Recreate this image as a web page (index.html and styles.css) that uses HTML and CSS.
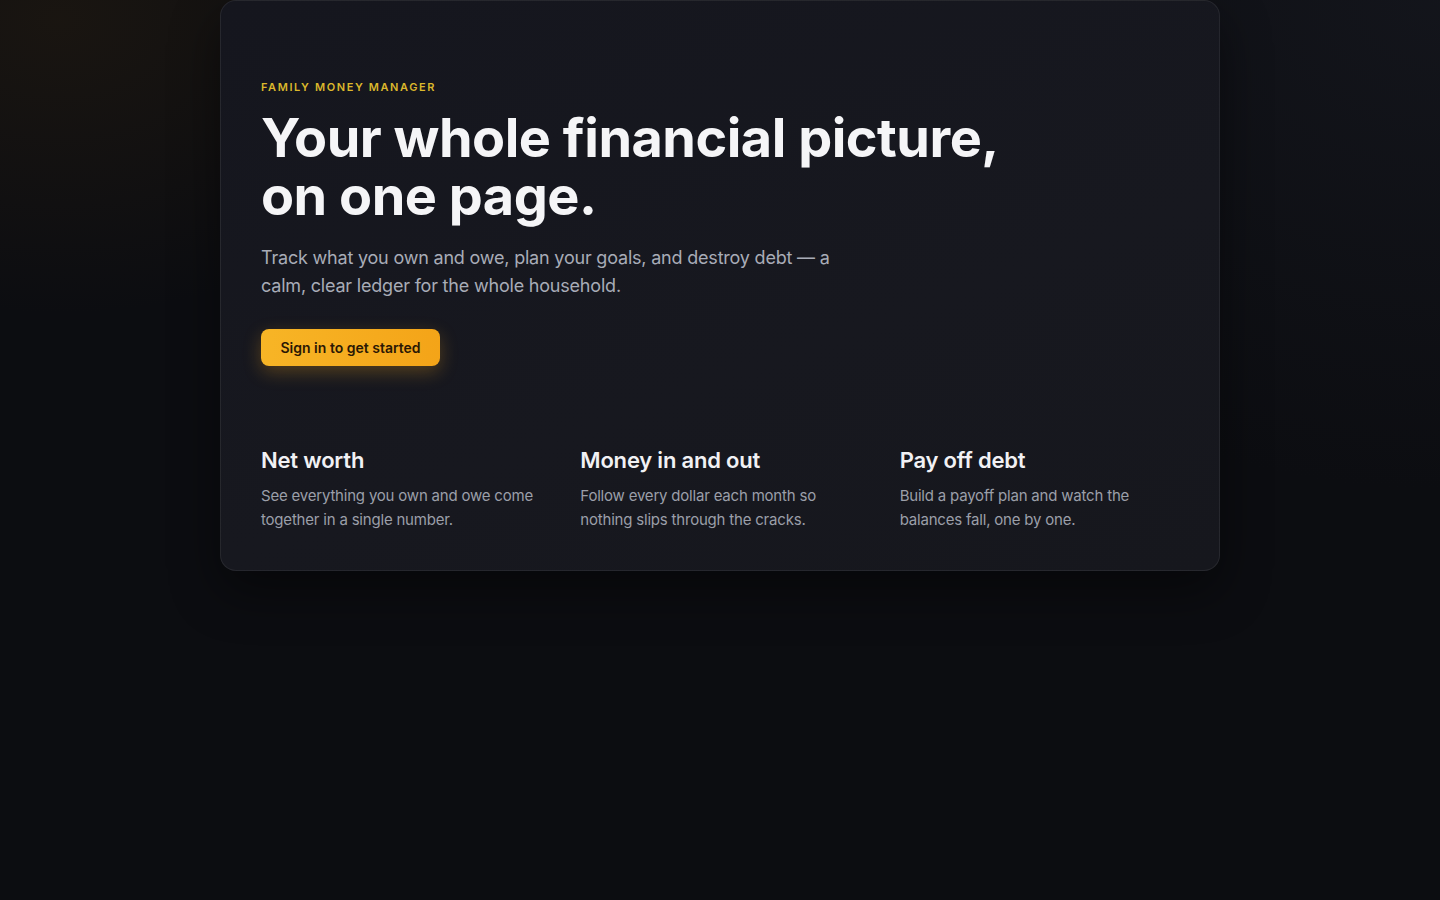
FILE: index.html
```html
<!DOCTYPE html>
<html lang="en">
<head>
<meta charset="utf-8">
<title>Family Money Manager</title>
<link rel="stylesheet" href="styles.css">
</head>
<body>
<main class="page">
  <section class="hero-card">
    <p class="eyebrow">FAMILY MONEY MANAGER</p>
    <h1 class="title">Your whole financial picture,<br>on one page.</h1>
    <p class="lede">Track what you own and owe, plan your goals, and destroy debt — a calm, clear ledger for the whole household.</p>
    <a class="cta" href="#">Sign in to get started</a>
    <div class="features">
      <div class="feature">
        <h2 class="feature-title">Net worth</h2>
        <p class="feature-text">See everything you own and owe come together in a single number.</p>
      </div>
      <div class="feature">
        <h2 class="feature-title">Money in and out</h2>
        <p class="feature-text">Follow every dollar each month so nothing slips through the cracks.</p>
      </div>
      <div class="feature">
        <h2 class="feature-title">Pay off debt</h2>
        <p class="feature-text">Build a payoff plan and watch the balances fall, one by one.</p>
      </div>
    </div>
  </section>
</main>
</body>
</html>
```

FILE: styles.css
```css
* { box-sizing: border-box; }
html, body { margin: 0; padding: 0; }
body {
  min-height: 900px;
  background:
    radial-gradient(ellipse 600px 420px at 60px 20px, rgba(60, 42, 16, 0.28), transparent 70%),
    radial-gradient(ellipse 900px 700px at 100% 0%, rgba(24, 26, 34, 0.6), transparent 70%),
    #0c0d11;
  font-family: Inter, "Noto Sans", sans-serif;
  color: #f2f2f5;
}
.page {
  display: flex;
  justify-content: center;
  padding: 0 220px;
}
.hero-card {
  width: 1000px;
  padding: 78px 40px 38px 40px;
  border-radius: 16px;
  background: linear-gradient(160deg, #15161e 0%, #17181f 60%, #16171d 100%);
  border: 1px solid rgba(255, 255, 255, 0.07);
  box-shadow: 0 20px 50px rgba(0, 0, 0, 0.45);
}
.eyebrow {
  margin: 0;
  font-size: 11px;
  font-weight: 600;
  letter-spacing: 1.6px;
  line-height: 16px;
  color: #dcb82c;
}
.title {
  margin: 14px 0 0;
  font-size: 54px;
  font-weight: 700;
  line-height: 58px;
  letter-spacing: -0.5px;
  color: #f5f5f7;
}
.lede {
  margin: 19px 0 0;
  max-width: 590px;
  font-size: 18px;
  line-height: 28px;
  font-weight: 400;
  letter-spacing: -0.2px;
  color: #a8acb7;
}
.cta {
  display: inline-flex;
  align-items: center;
  margin-top: 29px;
  height: 37px;
  padding: 0 19.5px;
  border-radius: 8px;
  background: linear-gradient(90deg, #f7b526 0%, #f4a418 100%);
  color: #2a1804;
  font-size: 14px;
  font-weight: 600;
  text-decoration: none;
  box-shadow: 0 6px 18px rgba(245, 166, 30, 0.28);
}
.features {
  display: grid;
  grid-template-columns: repeat(3, 1fr);
  gap: 40px;
  margin-top: 79px;
}
.feature-title {
  margin: 0;
  font-size: 22px;
  font-weight: 600;
  line-height: 30px;
  letter-spacing: -0.2px;
  color: #f1f1f4;
}
.feature-text {
  margin: 9px 0 0;
  max-width: 285px;
  font-size: 15px;
  line-height: 24px;
  letter-spacing: -0.2px;
  color: #9b9fa9;
}
```
